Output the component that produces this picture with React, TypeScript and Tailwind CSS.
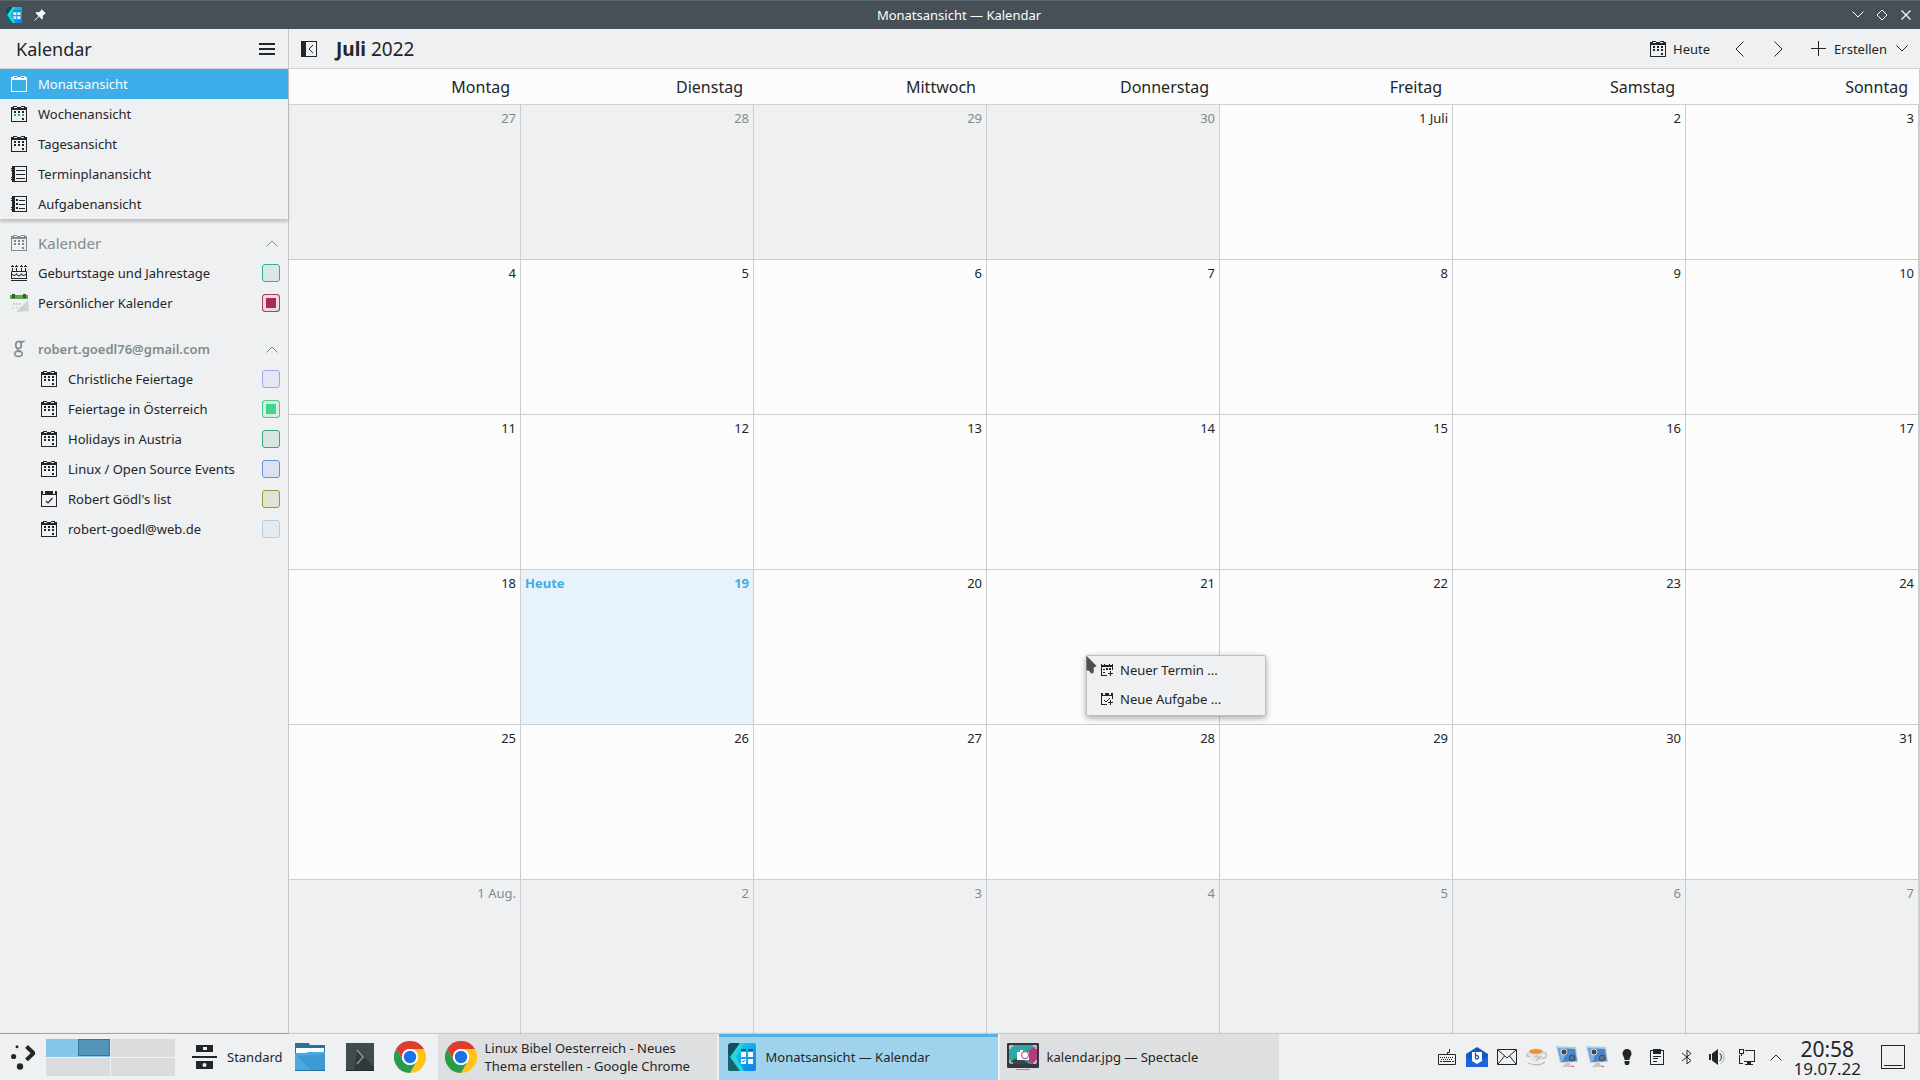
import React, { useState } from 'react';

interface IconProps {
  className?: string;
}

interface CalendarSource {
  name: string;
  icon: React.FC<IconProps>;
  swatch: string;
  checked?: boolean;
}

interface DayCell {
  label: string;
  outside?: boolean;
  today?: boolean;
}

const CalendarIcon: React.FC<IconProps & { accent?: string }> = ({ className = '', accent = 'currentColor' }) => (
  <svg width="16" height="16" viewBox="0 0 16 16" shapeRendering="crispEdges" className={className}>
    <path fill="currentColor" fillRule="evenodd" d="M0 1h2V0h4v1h4V0h4v1h2v15H0zM1 4v11h14V4zM3 1v1h3V1zM10 1v1h3V1z" />
    <path fill="currentColor" d="M3 5h2v2H3zM7 5h2v2H7zM11 5h2v2h-2zM11 12h2v2h-2z" />
    <path fill={accent} d="M3 8h2v2H3zM7 8h2v2H7zM11 8h2v2h-2z" />
  </svg>
);

const MonthIcon: React.FC<IconProps> = ({ className = '' }) => (
  <svg width="16" height="16" viewBox="0 0 16 16" shapeRendering="crispEdges" className={className}>
    <path fill="#fcfcfc" fillRule="evenodd" d="M0 1h2V0h4v1h4V0h4v1h2v15H0zM1 4v11h14V4zM3 1v1h3V1zM10 1v1h3V1z" />
    <path fill="#2fbf9b" d="M3 7h2v3H3zM7 7h2v3H7zM11 7h2v6h-2z" />
  </svg>
);

const WeekIcon: React.FC<IconProps> = ({ className }) => <CalendarIcon className={className} accent="#27ae82" />;

const ScheduleIcon: React.FC<IconProps> = ({ className = '' }) => (
  <svg width="16" height="16" viewBox="0 0 16 16" fill="currentColor" shapeRendering="crispEdges" className={className}>
    <path fillRule="evenodd" d="M1 0h15v16H1zM4 1v14h11V1z" />
    <path d="M0 2h1v1H0zM0 4h1v1H0zM0 11h1v1H0zM0 13h1v1H0zM5 4h9v1H5zM5 8h9v1H5zM5 12h9v1H5z" />
  </svg>
);

const TodoIcon: React.FC<IconProps> = ({ className = '' }) => (
  <svg width="16" height="16" viewBox="0 0 16 16" fill="currentColor" shapeRendering="crispEdges" className={className}>
    <path fillRule="evenodd" d="M1 0h15v16H1zM4 1v14h11V1z" />
    <path d="M0 2h1v1H0zM0 4h1v1H0zM0 11h1v1H0zM0 13h1v1H0zM5 3h2v2H5zM5 7h2v2H5zM5 11h2v2H5zM8 4h6v1H8zM8 8h6v1H8zM8 12h6v1H8z" />
  </svg>
);

const CakeIcon: React.FC<IconProps> = ({ className = '' }) => (
  <svg width="16" height="16" viewBox="0 0 16 16" fill="none" stroke="currentColor" className={className}>
    <path d="M1.500 0v2M5.500 0v2M10.500 0v2M14.500 0v2M1.500 3v3M5.500 3v3M10.500 3v3M14.500 3v3M0 1.500h3M4 1.500h3M9 1.500h3M13 1.500h3" strokeWidth="1" />
    <path d="M.5 13V6.500h15V13M0 13.500h16M0 15.500h16" />
    <path d="M1 9c1.500 2 3 2 4.500 0 1.500 2.500 3.500 2.500 5 0 1.500 2 3 2 4.500 0" strokeWidth="1.200" />
  </svg>
);

const PersonalIcon: React.FC<IconProps> = ({ className = '' }) => (
  <svg width="20" height="20" viewBox="0 0 20 20" className={className}>
    <path d="M1 5h18l1 13H0z" fill="#eef2f0" />
    <path d="M7 19l12-12 1 11z" fill="#ccd2d6" />
    <path d="M1 2h18v4H1z" fill="#5fa84b" />
    <path d="M3 1h3v4H3zM14 1h3v4h-3z" fill="#2c5a38" />
    <path d="M4 11h9" stroke="#8dcb84" strokeDasharray="2 1" />
    <path d="M3 15h13" stroke="#c3c9cd" strokeDasharray="2 2" />
  </svg>
);

const TaskListIcon: React.FC<IconProps> = ({ className = '' }) => (
  <svg width="16" height="16" viewBox="0 0 16 16" className={className}>
    <path fill="currentColor" fillRule="evenodd" shapeRendering="crispEdges" d="M0 0h2v3h2V0h8v3h2V0h2v16H0zM1 4v11h14V4z" />
    <path d="M5 10l2 2 4.500-5" fill="none" stroke="currentColor" strokeWidth="1.200" />
  </svg>
);

const GoogleIcon: React.FC<IconProps> = ({ className = '' }) => (
  <svg width="16" height="18" viewBox="0 0 16 18" fill="none" stroke="currentColor" className={className}>
    <ellipse cx="7.500" cy="5" rx="2.800" ry="3.500" strokeWidth="1.700" />
    <path d="M8 1.500h4.500l-2 1.200M7 8.500c-2 1.500.500 2 2.700 3" strokeWidth="1.400" />
    <ellipse cx="7.500" cy="13.800" rx="3.800" ry="2.600" strokeWidth="1.500" />
  </svg>
);

const Chevron: React.FC<{ dir: 'up' | 'down' | 'left' | 'right'; className?: string }> = ({ dir, className = '' }) => {
  const shapes = {
    up: { w: 12, h: 7, d: 'M.5 6.500L6 1l5.500 5.500' },
    down: { w: 12, h: 7, d: 'M.5.500L6 6 11.500.500' },
    left: { w: 9, h: 16, d: 'M8.500.500L1 8l7.500 7.500' },
    right: { w: 9, h: 16, d: 'M.5.500L8 8 .5 15.500' },
  };
  const { w, h, d } = shapes[dir];
  return (
    <svg width={w} height={h} viewBox={`0 0 ${w} ${h}`} fill="none" stroke="currentColor" className={className}>
      <path d={d} />
    </svg>
  );
};

const KalendarLogo: React.FC<{ size: number }> = ({ size }) => (
  <svg width={size} height={size} viewBox="0 0 28 28">
    <defs>
      <linearGradient id="kalendar-face" x1="0" y1="0" x2="1" y2="1">
        <stop offset="0" stopColor="#18dcea" />
        <stop offset="1" stopColor="#0b7df0" />
      </linearGradient>
    </defs>
    <rect width="28" height="28" rx="2" fill="url(#kalendar-face)" />
    <path d="M2 0h10L3 13.500V24l-2 4-1-1V2z" fill="#124e5c" />
    <path d="M0 9l3 4.500L12 28H2L0 26z" fill="#17626e" />
    <path d="M12 0h4L8 14l8 14h-4L2 14z" fill="#28d5da" />
    <path d="M13 6h5v2h-5zM20 6h5v2h-5z" fill="#0d5f96" />
    <path d="M13 9h5v5h-5zM20 9h5v5h-5zM13 16h5v5h-5zM20 16h5v5h-5z" fill="#f7fcff" />
    <path d="M14 18l1 1 2-2" stroke="#1c7fd4" fill="none" />
  </svg>
);

const ChromeIcon: React.FC = () => (
  <svg width="32" height="32" viewBox="0 0 32 32">
    <path d="M2.140 8A16 16 0 0 1 29.860 8H16a8 8 0 0 0-7 12z" fill="#df3b2f" />
    <path d="M29.860 8A16 16 0 0 1 16 32l7-12a8 8 0 0 0-7-12z" fill="#fdc51c" />
    <path d="M2.140 8A16 16 0 0 0 16 32l6.900-12a8 8 0 0 1-13.800 0z" fill="#2a9b48" />
    <circle cx="16" cy="16" r="8" fill="#fff" />
    <circle cx="16" cy="16" r="6.200" fill="#1b71e8" />
  </svg>
);

const SpectacleIcon: React.FC = () => (
  <svg width="32" height="28" viewBox="0 0 32 28">
    <rect width="32" height="25" rx="1" fill="#33383c" />
    <path d="M2 2h28v19H2z" fill="#2fa7a4" />
    <path d="M30 2v19h-5L15 12z" fill="#b53a7f" />
    <path d="M2 19l10-5 11 7H2z" fill="#34484f" />
    <path d="M10 9h3V7h3v2h6v8H10z" fill="#fff" />
    <circle cx="18" cy="12" r="3.500" fill="#fff" stroke="#c46b9d" strokeWidth="1.300" />
    <path d="M3 6V3h3M26 3h3v3M3 17v3h3M26 20h3v-3" fill="none" stroke="#fff" />
    <path d="M9 26.500h14" stroke="#8d9296" />
  </svg>
);

const FolderIcon: React.FC = () => (
  <svg width="31" height="28" viewBox="0 0 31 28">
    <path d="M0 0h14l1 2h15v10H0z" fill="#2c6f98" />
    <path d="M1 5h28v6H1z" fill="#f9fbfc" />
    <path d="M0 10h11l2-1h17v18H0z" fill="#46abe0" />
    <path d="M2 13l14 14h14V11z" fill="#3d9bd4" />
    <path d="M0 27h30v1H0z" fill="#2a6e99" />
  </svg>
);

const TerminalIcon: React.FC = () => (
  <svg width="28" height="28" viewBox="0 0 28 28">
    <rect width="28" height="28" fill="#414a4d" />
    <path d="M11 8l17 16v4H8z" fill="#30383a" />
    <path d="M11 7l6 7-6 7" fill="none" stroke="#8b9295" strokeWidth="1.500" />
    <path d="M0 27.500h28" stroke="#25292b" />
  </svg>
);

const ActivityIcon: React.FC = () => (
  <svg width="25" height="24" viewBox="0 0 25 24" fill="#232629">
    <path fillRule="evenodd" d="M4 0h17v7H4zM11 2v3h4V2zM4 16h17v8H4zM12.500 18a2 2 0 1 0 0 4 2 2 0 0 0 0-4z" />
    <path d="M0 11h25v2H0z" />
  </svg>
);

const LauncherIcon: React.FC = () => (
  <svg width="24" height="25" viewBox="0 0 24 25" fill="#232629">
    <circle cx="6" cy="1.800" r="1.500" />
    <circle cx="2.600" cy="11.500" r="2.600" />
    <circle cx="9" cy="21.500" r="3.200" />
    <path d="M15.500 1.500l7 6.700-7 6.700" fill="none" stroke="#232629" strokeWidth="4" />
  </svg>
);

const ScreensIcon: React.FC = () => (
  <svg width="22" height="22" viewBox="0 0 22 22">
    <path d="M0 0l20 1 2 15-18 1z" fill="#b9cbdd" />
    <path d="M2 2l17 1 2 12-16 1z" fill="#4b83c4" />
    <path d="M3 2l8 .5L7 15l-2 1z" fill="#7fb1e2" />
    <circle cx="8" cy="6" r="3" fill="#3b4754" stroke="#cfd8e0" />
    <circle cx="16" cy="12" r="2.800" fill="#5f7488" stroke="#2f4d73" />
    <path d="M10 17h4v2h3v2H6z" fill="#d0c5c0" />
    <path d="M16 20h2v1h-2z" fill="#d9534f" />
  </svg>
);

const trayItems: { label: string; icon: React.ReactNode }[] = [
  {
    label: 'Tastatur',
    icon: (
      <svg width="18" height="16" viewBox="0 0 18 16" fill="none" stroke="#232629">
        <path d="M.5 5.500h17v10H.500zM9.500 5V3.500h2V0" />
        <path d="M2 8.500h14M3 10.500h12" strokeDasharray="1 1" />
        <path d="M2 12.500h2M5 12.500h8M14 12.500h2" />
      </svg>
    ),
  },
  {
    label: 'E-Mail',
    icon: (
      <svg width="22" height="20" viewBox="0 0 22 20">
        <path d="M0 7l11-7 11 7v13H0z" fill="#1456c4" />
        <path d="M0 9l11 7L22 9v11H0z" fill="#1c64dc" />
        <path d="M6 5h10v9l-5 3-5-3z" fill="#fff" />
        <path d="M9.500 5.500v6M9.500 9a1.800 1.800 0 1 1 0 2.500" fill="none" stroke="#1456c4" strokeWidth="1.300" />
      </svg>
    ),
  },
  {
    label: 'Nachrichten',
    icon: (
      <svg width="20" height="16" viewBox="0 0 20 16" fill="none" stroke="#232629">
        <path d="M.5.500h19v15H.500zM1 1l9 8 9-8M1 15l6.500-8M19 15l-6.500-8" />
      </svg>
    ),
  },
  {
    label: 'Teekocher',
    icon: (
      <svg width="22" height="18" viewBox="0 0 22 18">
        <path d="M3 3h14l-2 9-3 2H8l-4-3z" fill="#e6e4e3" />
        <ellipse cx="10" cy="3.500" rx="7.500" ry="3" fill="#d5d2d0" />
        <ellipse cx="10" cy="3.500" rx="6.500" ry="2.300" fill="#ee9130" />
        <path d="M17 5h3v4l-4 2M3 6H1v2l3 1" fill="none" stroke="#c4c2c1" strokeWidth="1.500" />
        <path d="M9 9c3-3 5 1 1 3M13 11l3-3M2 15c4 2 12 3 17-1" fill="none" stroke="#bbbec1" strokeWidth="1.300" />
      </svg>
    ),
  },
  { label: 'Bildschirm 1', icon: <ScreensIcon /> },
  { label: 'Bildschirm 2', icon: <ScreensIcon /> },
  {
    label: 'Hinweise',
    icon: (
      <svg width="10" height="16" viewBox="0 0 10 16" fill="#232629">
        <path d="M5 0a4.500 4.500 0 0 1 4.500 4.500C9.500 7 7.500 8 7.500 11h-5C2.500 8 .5 7 .5 4.500A4.500 4.500 0 0 1 5 0zM2.500 12h5v2l-1 2h-3l-1-2z" />
      </svg>
    ),
  },
  {
    label: 'Zwischenablage',
    icon: (
      <svg width="14" height="16" viewBox="0 0 14 16" fill="#232629" shapeRendering="crispEdges">
        <path fillRule="evenodd" d="M0 1h3V0h8v1h3v15H0zM1 2v13h12V2h-2v3H3V2z" />
        <path d="M3 1h8v4H3zM3 7h8v1H3zM3 9h5v1H3zM3 12h4v1H3z" />
      </svg>
    ),
  },
  {
    label: 'Bluetooth',
    icon: (
      <svg width="10" height="16" viewBox="0 0 10 16" fill="none" stroke="#232629">
        <path d="M0 4l9 7.500-4 3.500V1l4 3.500L0 12" />
      </svg>
    ),
  },
  {
    label: 'Lautstärke',
    icon: (
      <svg width="16" height="16" viewBox="0 0 16 16" fill="#232629">
        <path d="M0 5h2v6H0zM3 4.500L9 0v16l-6-4.500z" />
        <path d="M10.500 4c2.500 2 2.500 6 0 8" fill="none" stroke="#232629" />
        <path d="M11.500 1.500c5 2.500 5 10.500 0 13" fill="none" stroke="#a9acae" />
      </svg>
    ),
  },
  {
    label: 'Netzwerk',
    icon: (
      <svg width="16" height="16" viewBox="0 0 16 16" fill="#232629" shapeRendering="crispEdges">
        <path d="M6 1h10v12H5v-1h10V2H6zM8 13h4v2h2v1H6v-1h2z" />
        <path fillRule="evenodd" d="M0 0h5v5H0zM1 1v3h3V1zM2 5h1v2H2zM0 6h1v8h3v1H0z" />
      </svg>
    ),
  },
];

const views: { name: string; icon: React.FC<IconProps> }[] = [
  { name: 'Monatsansicht', icon: MonthIcon },
  { name: 'Wochenansicht', icon: WeekIcon },
  { name: 'Tagesansicht', icon: CalendarIcon },
  { name: 'Terminplanansicht', icon: ScheduleIcon },
  { name: 'Aufgabenansicht', icon: TodoIcon },
];

const localCalendars: CalendarSource[] = [
  { name: 'Geburtstage und Jahrestage', icon: CakeIcon, swatch: 'border-[#2bb29b] bg-[#dbe7e6] checked:bg-[#2bb29b]' },
  {
    name: 'Persönlicher Kalender',
    icon: PersonalIcon,
    swatch: 'border-[#b23a5d] bg-[#ecdbe1] checked:bg-[#a62c50] checked:shadow-[inset_0_0_0_3px_#ecdbe1]',
    checked: true,
  },
];

const googleCalendars: CalendarSource[] = [
  { name: 'Christliche Feiertage', icon: CalendarIcon, swatch: 'border-[#a9a4ee] bg-[#e5e6f3]' },
  {
    name: 'Feiertage in Österreich',
    icon: CalendarIcon,
    swatch: 'border-[#4bcb90] bg-[#d8eee3] checked:bg-[#42d38c] checked:shadow-[inset_0_0_0_3px_#d8eee3]',
    checked: true,
  },
  { name: 'Holidays in Austria', icon: CalendarIcon, swatch: 'border-[#33a877] bg-[#d8e6df]' },
  { name: 'Linux / Open Source Events', icon: CalendarIcon, swatch: 'border-[#6391e0] bg-[#dbe3f0]' },
  { name: "Robert Gödl's list", icon: TaskListIcon, swatch: 'border-[#8b9f35] bg-[#e0e4d5]' },
  { name: 'robert-goedl@web.de', icon: CalendarIcon, swatch: 'border-[#b3cfe4] bg-[#e5ecf1]' },
];

const weekdays = ['Montag', 'Dienstag', 'Mittwoch', 'Donnerstag', 'Freitag', 'Samstag', 'Sonntag'];

const days: DayCell[] = [
  ...[27, 28, 29, 30].map((d) => ({ label: String(d), outside: true })),
  ...Array.from({ length: 31 }, (_, i) => ({ label: i === 0 ? '1 Juli' : String(i + 1), today: i === 18 })),
  ...Array.from({ length: 7 }, (_, i) => ({ label: i === 0 ? '1 Aug.' : String(i + 1), outside: true })),
];

const weeks = Array.from({ length: 6 }, (_, i) => days.slice(i * 7, i * 7 + 7));

const TitleBar: React.FC = () => (
  <header className="flex h-[29px] items-center border-t border-[#5c666d] bg-[#475057] pb-px text-[#fcfcfc]">
    <div className="flex flex-1 items-center gap-3 pl-1.5">
      <KalendarLogo size={16} />
      <svg width="12" height="12" viewBox="0 0 12 12" fill="currentColor">
        <path d="M7.500 0L12 4.500l-1.500.500-1.800 2 .3 2.500-1 1L5 7.500 1 11.500l-1 .5.500-1L4.500 7 1.500 4l1-1 2.500.3 2-1.800z" />
      </svg>
    </div>
    <h1>Monatsansicht — Kalendar</h1>
    <div className="flex flex-1 items-center justify-end gap-3 pr-2">
      <button aria-label="Minimieren" className="flex h-3 w-3 items-center justify-center">
        <Chevron dir="down" />
      </button>
      <button aria-label="Maximieren">
        <svg width="12" height="12" viewBox="0 0 12 12" fill="none" stroke="currentColor">
          <path d="M6 1l5 5-5 5-5-5z" />
        </svg>
      </button>
      <button aria-label="Schließen">
        <svg width="12" height="12" viewBox="0 0 12 12" fill="none" stroke="currentColor" strokeWidth="1.200">
          <path d="M1.500 1.500l9 9M10.500 1.500l-9 9" />
        </svg>
      </button>
    </div>
  </header>
);

const CalendarRow: React.FC<{ source: CalendarSource; nested?: boolean }> = ({ source, nested }) => {
  const Icon = source.icon;
  return (
    <label className={`flex h-[30px] items-center pr-2 ${nested ? 'pl-[38px]' : 'pl-2'}`}>
      <span className="flex w-[22px] justify-center">
        <Icon />
      </span>
      <span className="ml-2 flex-1">{source.name}</span>
      <input
        type="checkbox"
        defaultChecked={source.checked}
        className={`size-[18px] appearance-none rounded-[3px] border ${source.swatch}`}
      />
    </label>
  );
};

const Sidebar: React.FC = () => {
  const [active, setActive] = useState('Monatsansicht');

  return (
    <aside className="relative z-10 flex w-[289px] shrink-0 flex-col border-r border-b border-r-[#c5c7c9] border-b-[#bfc1c3] bg-[#eff0f1]">
      <div className="flex h-10 items-center justify-between border-b border-[#cfd1d2] pr-[13px] pl-4">
        <h2 className="text-[18px] leading-6">Kalendar</h2>
        <button aria-label="Menü">
          <svg width="16" height="12" viewBox="0 0 16 12" fill="#232629" shapeRendering="crispEdges">
            <path d="M0 0h16v2H0zM0 5h16v2H0zM0 10h16v2H0z" />
          </svg>
        </button>
      </div>
      <nav className="flex flex-col border-b border-[#c3c5c7] shadow-[0_2px_3px_rgba(0,0,0,0.2)]">
        {views.map(({ name, icon: Icon }) => (
          <button
            key={name}
            onClick={() => setActive(name)}
            className={`flex h-[30px] items-center pl-[11px] text-left ${active === name ? 'bg-[#3daee9] text-[#fcfcfc]' : ''}`}
          >
            <Icon />
            <span className="ml-[11px]">{name}</span>
          </button>
        ))}
      </nav>
      <section className="pt-2">
        <button className="flex h-[30px] w-full items-center pr-2.5 pl-[11px] text-[#7f8c8d]">
          <CalendarIcon />
          <span className="ml-[11px] flex-1 text-left text-[15px]">Kalender</span>
          <Chevron dir="up" />
        </button>
        {localCalendars.map((c) => (
          <CalendarRow key={c.name} source={c} />
        ))}
      </section>
      <section className="pt-4">
        <button className="flex h-[30px] w-full items-center pr-2.5 pl-[11px] text-[#7f8c8d]">
          <GoogleIcon />
          <span className="ml-[11px] flex-1 text-left font-semibold">robert.goedl76@gmail.com</span>
          <Chevron dir="up" />
        </button>
        {googleCalendars.map((c) => (
          <CalendarRow key={c.name} source={c} nested />
        ))}
      </section>
    </aside>
  );
};

const Toolbar: React.FC = () => (
  <div className="flex h-10 items-center border-b border-[#cfd1d2] bg-[#eff0f1] pr-3 pl-[13px]">
    <button aria-label="Seitenleiste einklappen">
      <svg width="16" height="16" viewBox="0 0 16 16">
        <path d="M0 0h16v16H0zM5 1v14h10V1z" fill="#232629" fillRule="evenodd" />
        <path d="M12 4L8 8l4 4" fill="none" stroke="#232629" />
      </svg>
    </button>
    <h2 className="ml-[19px] flex-1 text-[19px] leading-6">
      <b>Juli</b> 2022
    </h2>
    <button className="flex items-center gap-[7px]">
      <CalendarIcon />
      Heute
    </button>
    <button aria-label="Zurück" className="ml-[25px]">
      <Chevron dir="left" />
    </button>
    <button aria-label="Weiter" className="ml-[30px]">
      <Chevron dir="right" />
    </button>
    <button className="ml-7 flex items-center">
      <svg width="15" height="15" viewBox="0 0 15 15" fill="#232629" shapeRendering="crispEdges">
        <path d="M7 0h1v15H7zM0 7h15v1H0z" />
      </svg>
      <span className="mr-[9px] ml-2">Erstellen</span>
      <Chevron dir="down" />
    </button>
  </div>
);

const DayView: React.FC<{ day: DayCell }> = ({ day }) => {
  let tone = 'bg-[#fcfcfc]';
  if (day.outside) tone = 'bg-[#eff0f1] text-[#7f8c8d]';
  if (day.today) tone = 'bg-[#e7f2fb] font-bold text-[#3daee9]';

  return (
    <td className={`flex items-start justify-between border-r border-b border-[#cbcdce] px-1 pt-[3px] ${tone}`}>
      <span>{day.today ? 'Heute' : ''}</span>
      <span>{day.label}</span>
    </td>
  );
};

const MonthGrid: React.FC = () => (
  <table className="-mb-px flex flex-1 flex-col pr-px">
    <thead className="block bg-[#fcfcfc]">
      <tr className="grid h-9 grid-cols-7 border-b border-[#cfd1d2]">
        {weekdays.map((d) => (
          <th key={d} className="pt-1.5 pr-[11px] text-right text-base leading-6 font-normal">
            {d}
          </th>
        ))}
      </tr>
    </thead>
    <tbody className="grid flex-1 auto-rows-fr">
      {weeks.map((week, i) => (
        <tr key={i} className="grid grid-cols-7">
          {week.map((day) => (
            <DayView key={day.label} day={day} />
          ))}
        </tr>
      ))}
    </tbody>
  </table>
);

const ContextMenu: React.FC = () => (
  <div className="absolute top-[655px] left-[1086px] z-20">
    <div role="menu" className="flex w-[180px] flex-col rounded-[2px] border border-[#bcbebf] bg-[#eff0f1] pb-px shadow-[0_2px_6px_rgba(0,0,0,0.35)]">
      <button role="menuitem" className="flex h-7 items-center gap-[7px] pl-3.5">
        <svg width="12" height="12" viewBox="0 0 12 12" fill="#232629" shapeRendering="crispEdges">
          <path d="M0 0h1v1h2V0h1v1h4V0h1v1h2V0h1v6h-1V3H1v8h5v1H0zM2 5h2v1H2zM5 4h2v2H5zM8 4h2v2H8zM2 8h2v1H2zM9 7h1v2h2v1h-2v2H9v-2H7V9h2z" />
        </svg>
        Neuer Termin ...
      </button>
      <button role="menuitem" className="flex h-[30px] items-center gap-[7px] pl-3.5">
        <svg width="12" height="12" viewBox="0 0 12 12" fill="#232629">
          <path shapeRendering="crispEdges" d="M0 0h2v2h2V0h4v2h2V0h2v6h-1V3H1v8h5v1H0zM9 7h1v2h2v1h-2v2H9v-2H7V9h2z" />
          <path d="M3 7l2 2 4-4" fill="none" stroke="#232629" />
        </svg>
        Neue Aufgabe ...
      </button>
    </div>
    <svg width="12" height="20" viewBox="0 0 12 20" className="absolute top-0 left-0">
      <path d="M0 0l11 11-3 2v5l-3 1-2-3H0z" fill="#4d4f51" stroke="#fcfcfc" strokeWidth=".6" />
    </svg>
  </div>
);

const TaskButton: React.FC<{ icon: React.ReactNode; children: React.ReactNode; active?: boolean }> = ({ icon, children, active }) => (
  <button
    className={`flex w-[279px] items-center gap-2 pl-[7px] text-left leading-[18px] ${
      active ? 'border-t-[3px] border-[#57b0e4] bg-[#9fd2ed] pb-[3px]' : 'bg-[#dedfe0]'
    }`}
  >
    <span className="flex w-8 shrink-0 justify-center">{icon}</span>
    <span className="w-[212px]">{children}</span>
  </button>
);

const Panel: React.FC = () => (
  <footer className="relative z-10 flex h-[46px] items-stretch bg-[#eff0f1] shadow-[0_-1px_1px_rgba(0,0,0,0.15)]">
    <button aria-label="Anwendungen" className="pl-[11px]">
      <LauncherIcon />
    </button>
    <div className="ml-[11px] grid w-[129px] grid-cols-2 gap-px self-center">
      <button aria-label="Arbeitsfläche 1" className="flex h-[18px] justify-end bg-[#84c6ea]">
        <span className="h-[17px] w-8 border border-[#2f77a3] bg-[#5295b9]" />
      </button>
      <button aria-label="Arbeitsfläche 2" className="h-[18px] bg-[#dadbdc]" />
      <button aria-label="Arbeitsfläche 3" className="h-[18px] bg-[#dadbdc]" />
      <button aria-label="Arbeitsfläche 4" className="h-[18px] bg-[#dadbdc]" />
    </div>
    <button className="ml-[17px] flex items-center gap-2.5">
      <ActivityIcon />
      Standard
    </button>
    <div className="ml-3 flex items-center gap-5">
      <button aria-label="Dateien">
        <FolderIcon />
      </button>
      <button aria-label="Konsole">
        <TerminalIcon />
      </button>
      <button aria-label="Google Chrome">
        <ChromeIcon />
      </button>
    </div>
    <div className="ml-3 flex gap-0.5">
      <TaskButton icon={<ChromeIcon />}>Linux Bibel Oesterreich - Neues Thema erstellen - Google Chrome</TaskButton>
      <TaskButton icon={<KalendarLogo size={28} />} active>
        Monatsansicht — Kalendar
      </TaskButton>
      <TaskButton icon={<SpectacleIcon />}>kalendar.jpg — Spectacle</TaskButton>
    </div>
    <div className="ml-auto flex items-center">
      {trayItems.map((item) => (
        <button key={item.label} aria-label={item.label} className="flex w-[30px] justify-center">
          {item.icon}
        </button>
      ))}
      <button aria-label="Weitere anzeigen" className="flex w-7 justify-center">
        <Chevron dir="up" />
      </button>
    </div>
    <div className="ml-1 flex flex-col items-center justify-center">
      <time className="text-[21px] leading-6">20:58</time>
      <time className="text-[17px] leading-4">19.07.22</time>
    </div>
    <button aria-label="Arbeitsfläche anzeigen" className="mr-[15px] ml-5">
      <svg width="24" height="24" viewBox="0 0 24 24" fill="#232629" shapeRendering="crispEdges">
        <path fillRule="evenodd" d="M0 0h24v24H0zM1 1v22h22V1z" />
        <path d="M3 20h18v1H3z" />
      </svg>
    </button>
  </footer>
);

export default function App() {
  return (
    <div className="relative flex min-h-screen flex-col overflow-hidden bg-[#eff0f1] font-['Noto_Sans',sans-serif] text-[13px] leading-5 text-[#232629]">
      <TitleBar />
      <div className="flex flex-1">
        <Sidebar />
        <main className="-ml-px flex min-w-0 flex-1 flex-col bg-[#cbcdce]">
          <Toolbar />
          <MonthGrid />
        </main>
      </div>
      <Panel />
      <ContextMenu />
    </div>
  );
}
